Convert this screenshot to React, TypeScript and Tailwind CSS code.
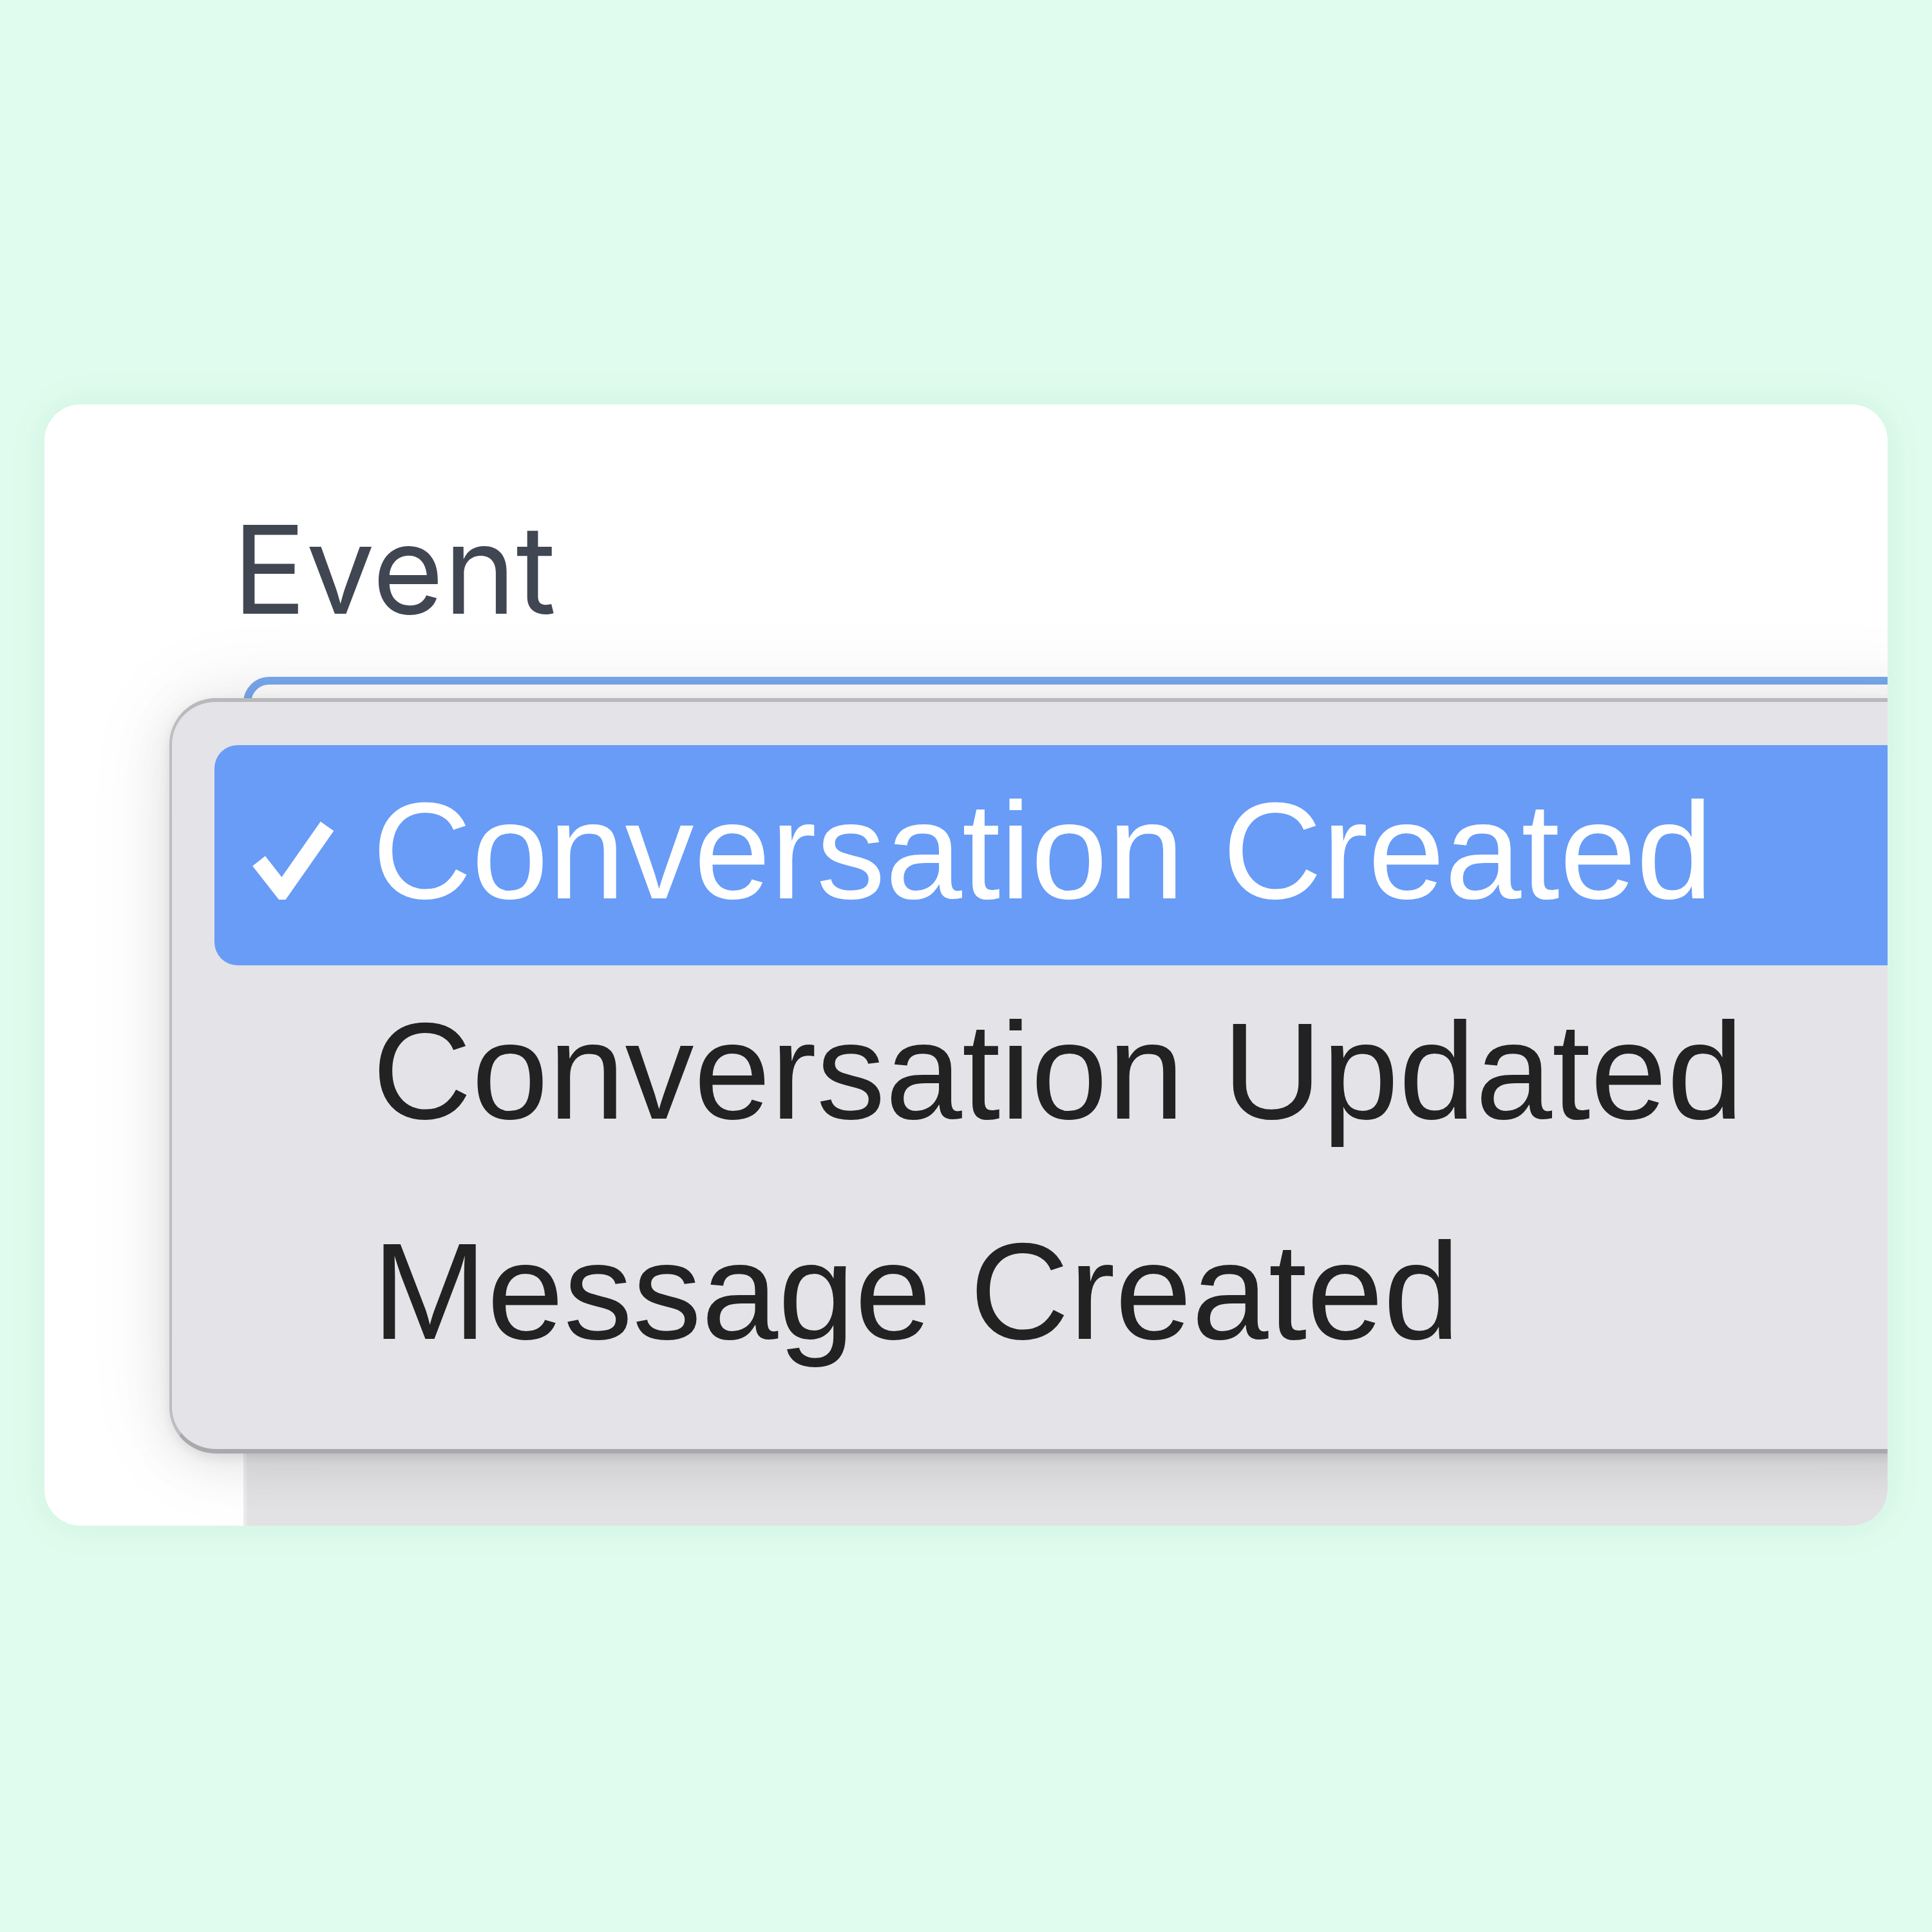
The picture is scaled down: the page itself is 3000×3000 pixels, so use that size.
import React from 'react';

const options = [
  { label: 'Conversation Created', selected: true },
  { label: 'Conversation Updated', selected: false },
  { label: 'Message Created', selected: false },
];

const Check = () => (
  <svg width="126" height="122" viewBox="0 0 126 122" className="mt-[118px] shrink-0">
    <polyline points="10,62 46,108 116,8" fill="none" stroke="#ffffff" strokeWidth="25" strokeLinecap="butt" strokeLinejoin="miter" />
  </svg>
);

function OptionRow({ label, selected }: { label: string; selected: boolean }) {
  return (
    <div
      className={`flex items-start h-[342px] pl-[59px] rounded-[36px] ${selected ? 'bg-[#689cf6] text-white' : 'text-[#222222]'}`}
    >
      {selected ? <Check /> : <div className="w-[126px] shrink-0" />}
      <div className="ml-[60px] text-[214px] leading-[328px] whitespace-nowrap [font-family:'Liberation_Sans',Arial,sans-serif]">
        {label}
      </div>
    </div>
  );
}

export default function App() {
  return (
    <div className="w-[3000px] h-[3000px] bg-[#e0fcee] pt-[628px] pl-[69px]">
      <div className="w-[2862px] h-[1741px] bg-white rounded-[56px] overflow-hidden shadow-[0_0_60px_rgba(20,120,60,0.08)] pt-[161px] pl-[292px]">
        {/* Label */}
        <div className="text-[190px] leading-none text-[#404652] [font-family:Inter,'Noto_Sans',sans-serif]">
          Event
        </div>

        {/* Select with open menu */}
        <div className="relative z-10 ml-[17px] mt-[72px] w-[2700px] h-[150px] bg-white border-[12px] border-[#78a9ee] rounded-[40px]">
          <div className="absolute left-[-127px] top-[21px] w-[2800px] bg-[#e4e3e8] rounded-[72px] border-l-[4px] border-t-[6px] border-b-[7px] border-l-[#bdbdc0] border-t-[#b9b9bc] border-b-[#a9a9ad] pl-[66px] pt-[67px] pb-[67px] shadow-[0_0_140px_rgba(0,0,0,0.08),0_14px_80px_rgba(0,0,0,0.08),0_6px_18px_rgba(0,0,0,0.08)]">
            {options.map(o => (
              <OptionRow key={o.label} label={o.label} selected={o.selected} />
            ))}
          </div>
        </div>

        {/* Next field, mostly hidden behind the menu */}
        <div className="relative ml-[17px] mt-[60px] w-[2700px] h-[1400px] bg-[#e3e3e6] border-l-[5px] border-t-[5px] border-[#ebebed] rounded-[36px]" />
      </div>
    </div>
  );
}
